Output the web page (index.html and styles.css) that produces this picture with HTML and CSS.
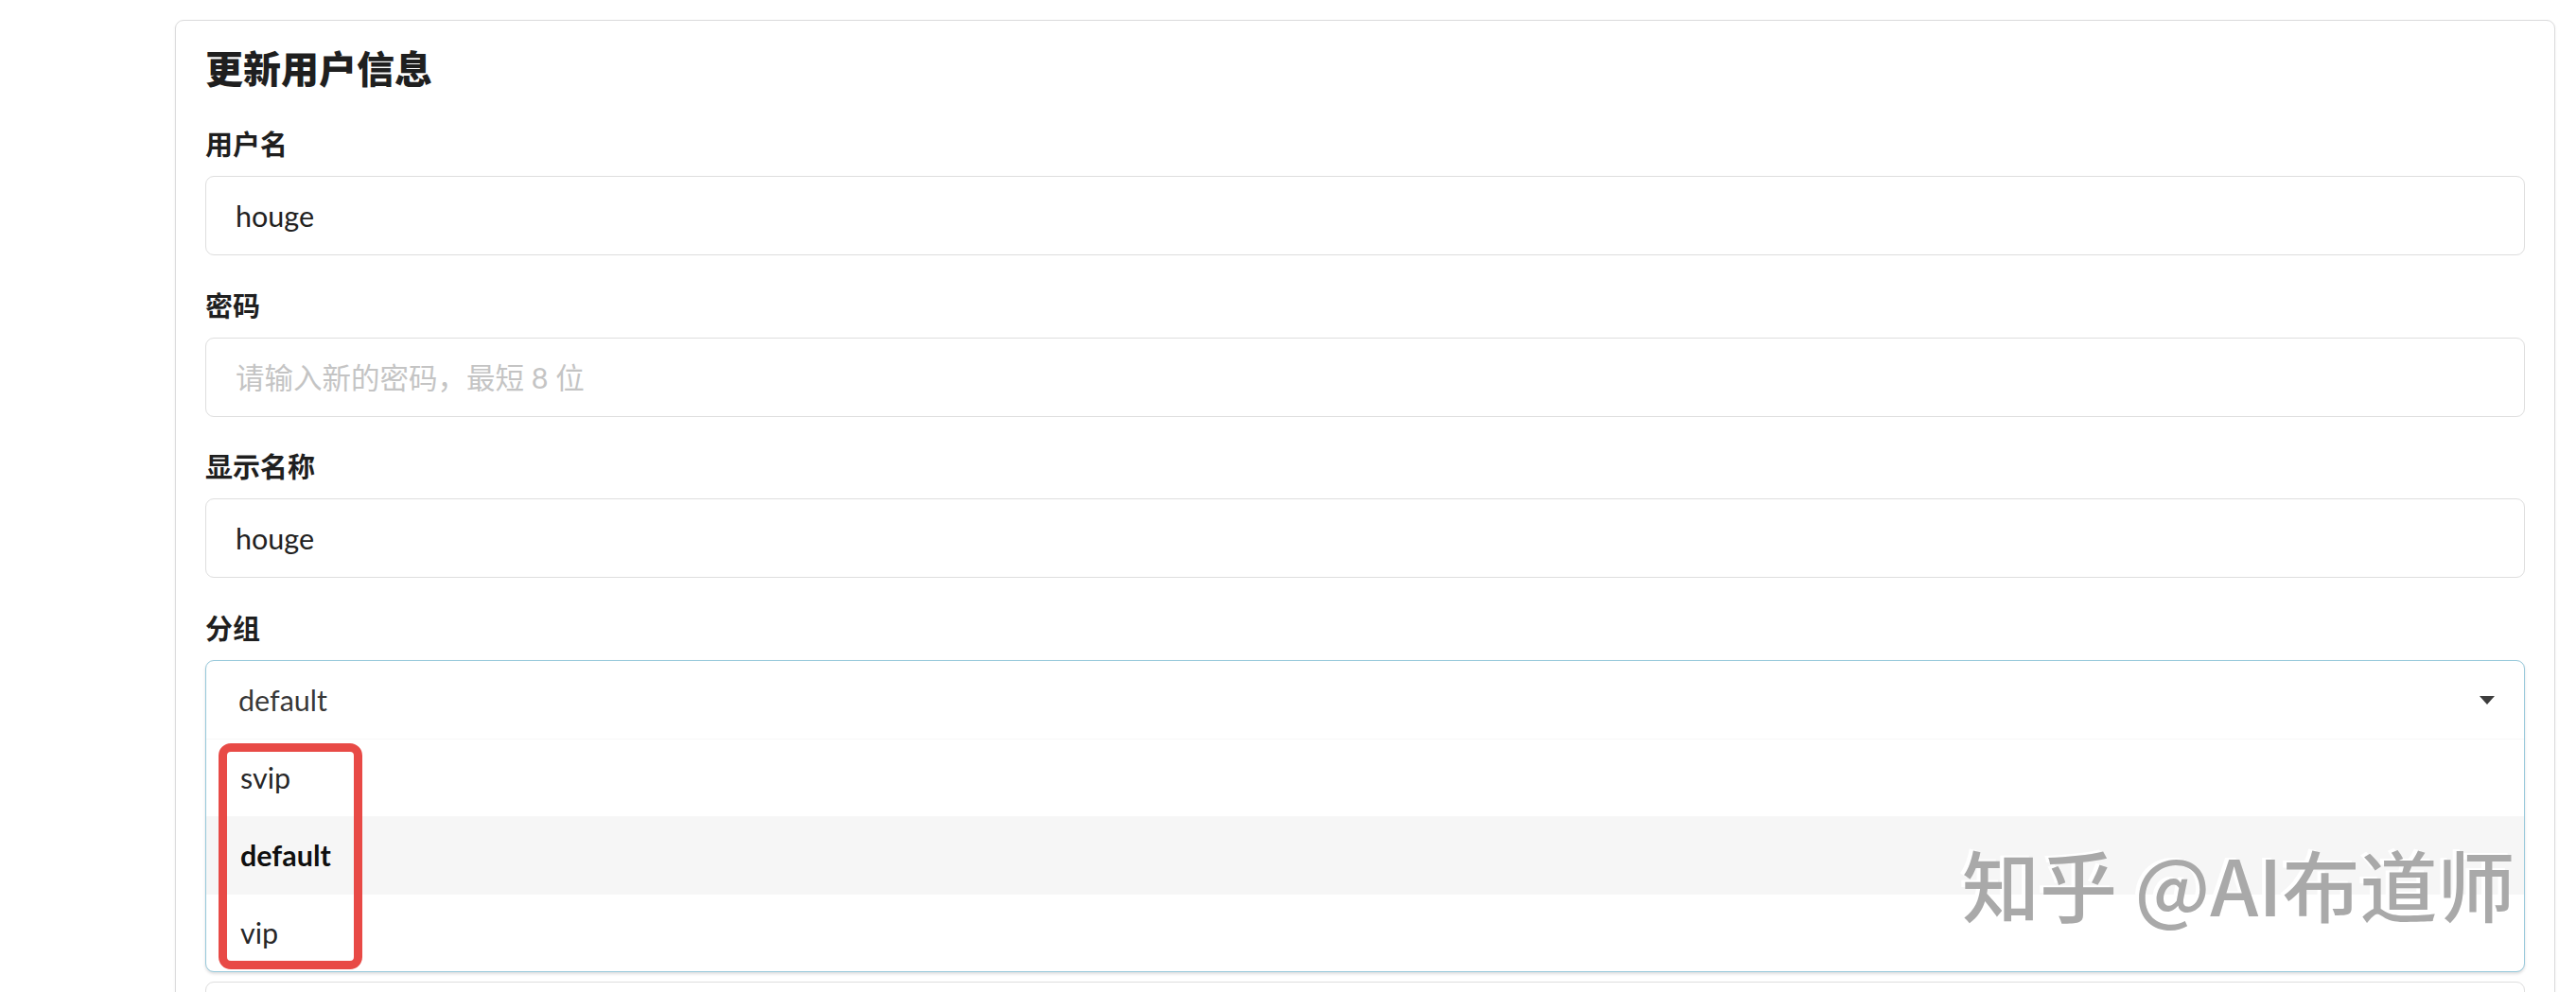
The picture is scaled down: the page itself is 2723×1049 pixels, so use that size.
FILE: index.html
```html
<!DOCTYPE html>
<html lang="zh-CN">
<head>
<meta charset="utf-8">
<title>更新用户信息</title>
<link rel="stylesheet" href="styles.css">
</head>
<body>
  <div class="segment">
    <h3 class="title">更新用户信息</h3>
    <div class="field">
      <div class="label">用户名</div>
      <div class="input"><span>houge</span></div>
    </div>
    <div class="field">
      <div class="label">密码</div>
      <div class="input"><span class="placeholder">请输入新的密码，最短 8 位</span></div>
    </div>
    <div class="field">
      <div class="label">显示名称</div>
      <div class="input"><span>houge</span></div>
    </div>
    <div class="field field-select">
      <div class="label">分组</div>
      <div class="dropdown">
        <div class="dropdown-head">
          <span class="dropdown-text">default</span>
          <span class="caret"></span>
        </div>
        <div class="menu">
          <div class="item">svip</div>
          <div class="item item-active">default</div>
          <div class="item">vip</div>
        </div>
        <div class="annotation"></div>
      </div>
    </div>
    <div class="field">
      <div class="input"><span></span></div>
    </div>
  </div>
  <div class="watermark">知乎 @AI布道师</div>
</body>
</html>
```

FILE: styles.css
```css
html, body {
  margin: 0;
  padding: 0;
  background: #ffffff;
  overflow: hidden;
}

body {
  font-family: Lato, "Noto Sans CJK SC", sans-serif;
  font-size: 30.5px;
  color: rgba(0, 0, 0, 0.87);
  padding: 21px 0 0 185px;
  height: 1049px;
  box-sizing: border-box;
}

.segment {
  box-sizing: border-box;
  width: 2516px;
  border: 1px solid #dcdcdd;
  border-radius: 9px;
  box-shadow: 0 1px 3px 0 rgba(34, 36, 38, 0.08);
  padding: 27px 31px 40px 31px;
  background: #fff;
}

.title {
  margin: 0 0 36px 0;
  font-size: 40px;
  line-height: 48px;
  font-weight: 900;
  color: #1f1f1f;
}

.field {
  margin-bottom: 33.5px;
}

.label {
  font-size: 29px;
  line-height: 40px;
  font-weight: 700;
  color: #1f1f1f;
  margin-bottom: 13px;
}

.input {
  box-sizing: border-box;
  height: 84px;
  border: 1px solid #dedede;
  border-radius: 9px;
  padding: 0 31px;
  display: flex;
  align-items: center;
  line-height: 36px;
  color: #212121;
}

.placeholder {
  color: #c4c4c4;
}

.field-select {
  margin-bottom: 10px;
}

.dropdown {
  position: relative;
  box-sizing: border-box;
  border: 1px solid #96c8da;
  border-radius: 9px;
  box-shadow: 0 2px 3px 0 rgba(34, 36, 38, 0.15);
  background: #fff;
}

.dropdown-head {
  height: 82px;
  display: flex;
  align-items: center;
  justify-content: space-between;
  padding: 0 31px 0 34px;
  line-height: 36px;
}

.dropdown-text {
  color: rgba(0, 0, 0, 0.8);
}

.caret {
  width: 0;
  height: 0;
  border-left: 8.5px solid transparent;
  border-right: 8.5px solid transparent;
  border-top: 9px solid #3d3d3d;
  margin-top: 2px;
}

.menu {
  display: flex;
  flex-direction: column;
}

.item {
  box-sizing: border-box;
  height: 82px;
  border-top: 1px solid #f7f7f7;
  display: flex;
  align-items: center;
  padding: 0 36px;
  line-height: 36px;
  color: rgba(0, 0, 0, 0.87);
}

.item-active {
  background: #f6f6f6;
  font-weight: 700;
  color: rgba(0, 0, 0, 0.95);
}

.annotation {
  position: absolute;
  left: 13px;
  top: 87px;
  width: 152px;
  height: 239px;
  box-sizing: border-box;
  border: 9px solid #e84a46;
  border-radius: 13px;
  pointer-events: none;
}

.watermark {
  position: absolute;
  left: 2074px;
  top: 893px;
  font-family: "Noto Sans CJK SC", sans-serif;
  font-size: 82px;
  font-weight: 500;
  line-height: 1;
  white-space: nowrap;
  color: #a9a9a9;
  text-shadow: -4px -2px 0 #ffffff;
}
```
